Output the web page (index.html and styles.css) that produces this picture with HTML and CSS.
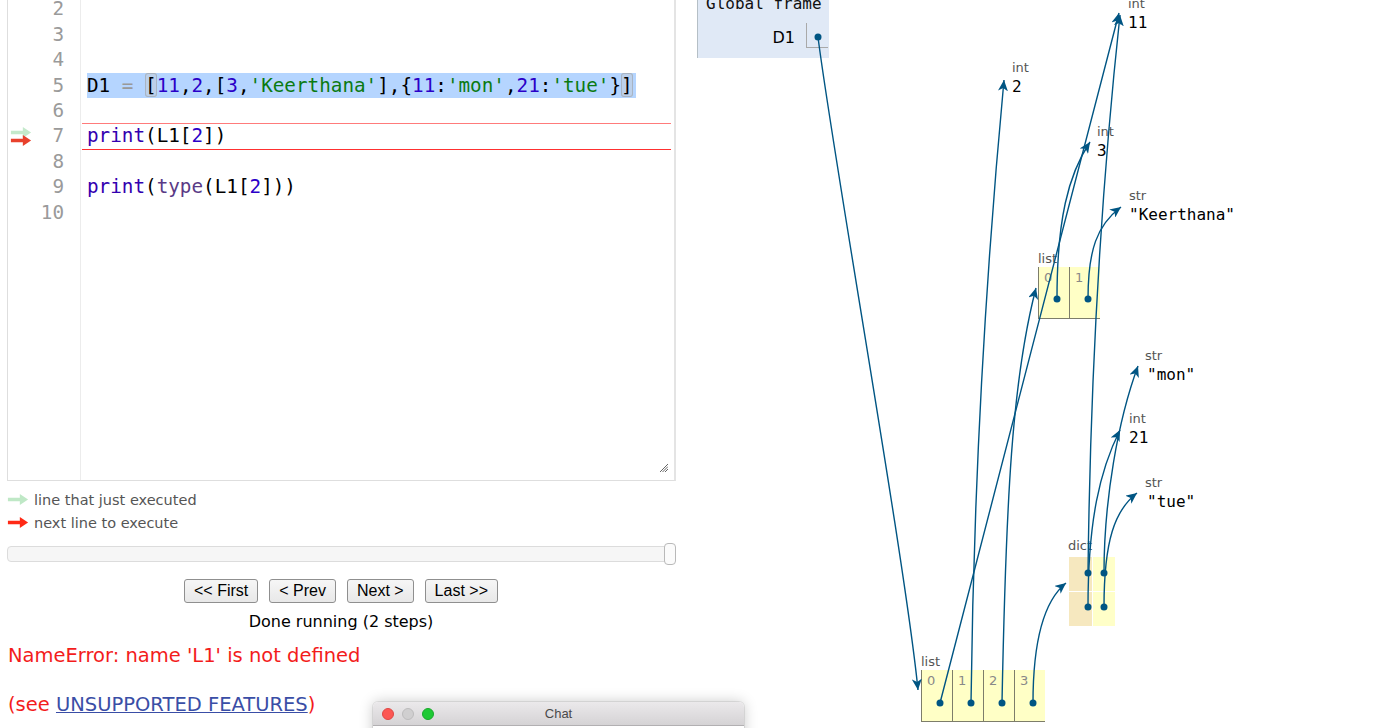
FILE: index.html
```html
<!DOCTYPE html>
<html>
<head>
<meta charset="utf-8">
<link rel="stylesheet" href="styles.css">
</head>
<body>
<div class="page">
  <div class="left">
    <div class="editor">
      <div class="gutter">
        <div class="ln">1</div>
        <div class="ln">2</div>
        <div class="ln">3</div>
        <div class="ln">4</div>
        <div class="ln">5</div>
        <div class="ln">6</div>
        <div class="ln">7
          <svg class="garrow g-prev" viewBox="0 0 22 12"><path d="M0,4 H13 V0 L22,6 L13,12 V8 H0 Z"/></svg>
          <svg class="garrow g-next" viewBox="0 0 22 12"><path d="M0,4 H13 V0 L22,6 L13,12 V8 H0 Z"/></svg>
        </div>
        <div class="ln">8</div>
        <div class="ln">9</div>
        <div class="ln">10</div>
      </div>
      <div class="code">
        <div class="cl"> </div>
        <div class="cl"> </div>
        <div class="cl"> </div>
        <div class="cl"> </div>
        <div class="cl"><span class="hl">D1 <span class="op">=</span> <span class="bm">[</span><span class="num">11</span>,<span class="num">2</span>,[<span class="num">3</span>,<span class="str">'Keerthana'</span>],{<span class="num">11</span>:<span class="str">'mon'</span>,<span class="num">21</span>:<span class="str">'tue'</span>}<span class="bm">]</span></span></div>
        <div class="cl"> </div>
        <div class="cl cur"><span class="kw">print</span>(L1[<span class="num">2</span>])</div>
        <div class="cl"> </div>
        <div class="cl"><span class="kw">print</span>(<span class="bi">type</span>(L1[<span class="num">2</span>]))</div>
        <div class="cl"> </div>
      </div>
      <svg class="grip" viewBox="0 0 9 8"><path d="M1,8 L9,0 M3.5,8 L9,2.5 M6,8 L9,5" /></svg>
    </div>

    <div class="legend">
      <div class="leg-row"><svg class="larrow prev" viewBox="0 0 22 12"><path d="M0,4 H13 V0 L22,6 L13,12 V8 H0 Z"/></svg><span>line that just executed</span></div>
      <div class="leg-row"><svg class="larrow next" viewBox="0 0 22 12"><path d="M0,4 H13 V0 L22,6 L13,12 V8 H0 Z"/></svg><span>next line to execute</span></div>
    </div>

    <div class="slider"><div class="handle"></div></div>

    <div class="buttons">
      <button class="btn">&lt;&lt; First</button>
      <button class="btn">&lt; Prev</button>
      <button class="btn">Next &gt;</button>
      <button class="btn">Last &gt;&gt;</button>
    </div>
    <div class="status">Done running (2 steps)</div>
    <div class="error">NameError: name 'L1' is not defined</div>
    <div class="see">(see <a href="#">UNSUPPORTED FEATURES</a>)</div>
  </div>

  <div class="viz">
    <div class="frame">
      <div class="frame-title">Global frame</div>
      <div class="frame-row">
        <div class="vname">D1</div>
        <div class="vbox"></div>
      </div>
    </div>

    <div class="obj o-11"><div class="lbl">int</div><div class="val">11</div></div>
    <div class="obj o-2"><div class="lbl">int</div><div class="val">2</div></div>
    <div class="obj o-3"><div class="lbl">int</div><div class="val">3</div></div>
    <div class="obj o-k"><div class="lbl">str</div><div class="val">"Keerthana"</div></div>
    <div class="obj o-mon"><div class="lbl">str</div><div class="val">"mon"</div></div>
    <div class="obj o-21"><div class="lbl">int</div><div class="val">21</div></div>
    <div class="obj o-tue"><div class="lbl">str</div><div class="val">"tue"</div></div>

    <div class="obj l-inner">
      <div class="lbl">list</div>
      <div class="cells">
        <div class="cell"><span class="idx">0</span></div>
        <div class="cell"><span class="idx">1</span></div>
      </div>
    </div>

    <div class="obj l-main">
      <div class="lbl">list</div>
      <div class="cells">
        <div class="cell"><span class="idx">0</span></div>
        <div class="cell"><span class="idx">1</span></div>
        <div class="cell"><span class="idx">2</span></div>
        <div class="cell"><span class="idx">3</span></div>
      </div>
    </div>

    <div class="obj d-main">
      <div class="lbl">dict</div>
      <div class="dgrid">
        <div class="dk"></div><div class="dv"></div>
        <div class="dk"></div><div class="dv"></div>
      </div>
    </div>

    <svg class="arrows" width="707" height="728">
      <defs>
        <marker id="ah" markerUnits="userSpaceOnUse" markerWidth="12" markerHeight="10" refX="11" refY="5" orient="auto">
          <path d="M0,0 L11,5 L0,10 L3,5 Z" fill="#005583"/>
        </marker>
      </defs>
      <g transform="translate(-690,0)" fill="none" stroke="#005583" stroke-width="1.4" marker-end="url(#ah)">
        <path d="M818,37 C832,150 905,560 918,690"/>
        <path d="M940,703 C975,560 1080,170 1119,13"/>
        <path d="M971,703 C974,450 988,250 1004,80"/>
        <path d="M1002,703 C1006,500 1012,380 1036,288"/>
        <path d="M1033,703 C1033,640 1045,600 1066,583"/>
        <path d="M1057,299 C1057,220 1068,175 1090,142"/>
        <path d="M1088,299 C1088,250 1097,225 1121,207"/>
        <path d="M1088,573 C1090,400 1100,200 1120,15"/>
        <path d="M1104,573 C1104,500 1118,420 1138,366"/>
        <path d="M1088,607 C1088,520 1100,470 1120,430"/>
        <path d="M1104,607 C1104,540 1115,510 1137,493"/>
      </g>
      <g transform="translate(-690,0)" fill="#005583">
        <circle cx="818" cy="37" r="3.5"/>
        <circle cx="940" cy="703" r="3.5"/>
        <circle cx="971" cy="703" r="3.5"/>
        <circle cx="1002" cy="703" r="3.5"/>
        <circle cx="1033" cy="703" r="3.5"/>
        <circle cx="1057" cy="299" r="3.5"/>
        <circle cx="1088" cy="299" r="3.5"/>
        <circle cx="1088" cy="573" r="3.5"/>
        <circle cx="1104" cy="573" r="3.5"/>
        <circle cx="1088" cy="607" r="3.5"/>
        <circle cx="1104" cy="607" r="3.5"/>
      </g>
    </svg>
  </div>
</div>

<div class="chat">
  <div class="chat-bar">
    <span class="tl red"></span><span class="tl gray"></span><span class="tl green"></span>
    <span class="chat-title">Chat</span>
  </div>
</div>
</body>
</html>
```

FILE: styles.css
```css
html, body {
  margin: 0;
  padding: 0;
  background: #fff;
  overflow: hidden;
}
body {
  width: 1397px;
  height: 728px;
  position: relative;
}
.page {
  display: flex;
  align-items: flex-start;
}
.left {
  width: 669px;
  margin-left: 7px;
  margin-top: -34px;
  font-family: "DejaVu Sans", Verdana, sans-serif;
}

/* editor */
.editor {
  position: relative;
  box-sizing: border-box;
  height: 515px;
  border: 1px solid #dedede;
  border-right: 2px solid #e4e4e4;
  display: flex;
}
.gutter {
  width: 72px;
  flex: none;
  border-right: 1px solid #ececec;
  padding-top: 4px;
}
.ln {
  position: relative;
  height: 25.4px;
  line-height: 25.4px;
  text-align: right;
  padding-right: 16px;
  color: #9a9a9a;
  font: 19.3px/25.4px "DejaVu Sans Mono", monospace;
}
.garrow {
  position: absolute;
  left: 2px;
  width: 22px;
  height: 11px;
}
.g-prev { top: 4px; fill: #c4e9cb; }
.g-next { top: 12px; fill: #e8412c; }
.code {
  flex: 1;
  padding-top: 4px;
  padding-right: 3px;
}
.cl {
  box-sizing: border-box;
  height: 25.4px;
  margin-left: 1px;
  padding-left: 5px;
  white-space: pre;
  font: 19.3px/25.4px "DejaVu Sans Mono", monospace;
  color: #000;
}
.cl.cur {
  height: 26.4px;
  margin-bottom: -1px;
  line-height: 24.4px;
  border-top: 1px solid #ff7b7b;
  border-bottom: 1px solid #ff3030;
}
.hl {
  display: inline-block;
  height: 25.4px;
  background: #b5d5ff;
  padding-right: 3px;
}
.bm {
  display: inline-block;
  height: 24px;
  box-shadow: inset 0 0 0 1px #a9b4c2;
  border-radius: 3px;
  background: #bcd0ea;
}
.op { color: #999; }
.num { color: #2b00c8; }
.str { color: #0b7a12; }
.kw { color: #3300b0; }
.bi { color: #5a3a86; }
.grip {
  position: absolute;
  right: 6px;
  bottom: 8px;
  width: 9px;
  height: 8px;
  stroke: #666;
  stroke-width: 1;
  fill: none;
}

/* legend */
.legend {
  margin-top: 7px;
}
.leg-row {
  display: flex;
  align-items: center;
  height: 23px;
  font-size: 14.5px;
  color: #555;
}
.larrow {
  width: 22px;
  height: 11px;
  margin-right: 5px;
}
.larrow.prev { fill: #bfe8c6; }
.larrow.next { fill: #ff2a16; }

/* slider */
.slider {
  position: relative;
  margin-top: 12px;
  height: 16px;
  box-sizing: border-box;
  border: 1px solid #dcdcdc;
  border-radius: 4px;
  background: #f6f6f6;
}
.handle {
  position: absolute;
  right: -1px;
  top: -4px;
  width: 12px;
  height: 22px;
  box-sizing: border-box;
  border: 1px solid #b9b9b9;
  border-radius: 4px;
  background: #fbfbfb;
}

/* buttons */
.buttons {
  margin-top: 17px;
  display: flex;
  justify-content: center;
  gap: 11px;
  padding-right: 1px;
}
.btn {
  height: 24px;
  padding: 0 9px;
  font: 16px "Liberation Sans", Arial, sans-serif;
  color: #000;
  background: linear-gradient(#f6f6f6, #e8e8e8);
  border: 1px solid #8f8f8f;
  border-radius: 3px;
}
.status {
  margin-top: 9px;
  text-align: center;
  font-size: 16px;
  line-height: 20px;
  color: #000;
  padding-right: 1px;
}
.error {
  margin-top: 12px;
  margin-left: 1px;
  font-size: 19.5px;
  line-height: 24px;
  color: #f31c1c;
}
.see {
  margin-top: 25px;
  margin-left: 1px;
  font-size: 19.5px;
  line-height: 24px;
  color: #f31c1c;
}
.see a {
  color: #3a4ea6;
  text-decoration: underline;
}

/* visualization */
.viz {
  position: relative;
  margin-left: 14px;
  width: 707px;
  height: 728px;
  font-family: "DejaVu Sans", Verdana, sans-serif;
}
.frame {
  position: absolute;
  left: 7px;
  top: -20px;
  width: 132px;
  height: 78px;
  box-sizing: border-box;
  background: #e0e9f6;
  border-left: 1px solid #b5bfc6;
  padding-top: 14px;
}
.frame-title {
  padding-left: 8px;
  font: 16px/20px "DejaVu Sans Mono", monospace;
  color: #111;
  white-space: nowrap;
}
.frame-row {
  display: flex;
  margin-top: 9px;
  height: 25px;
}
.vname {
  width: 97px;
  text-align: right;
  padding-top: 5px;
  font-size: 16px;
  line-height: 20px;
  color: #000;
}
.vbox {
  margin-left: 11px;
  width: 22px;
  height: 25px;
  box-sizing: border-box;
  border-left: 1px solid #a9a9a9;
  border-bottom: 1px solid #a9a9a9;
}

.obj {
  position: absolute;
}
.lbl {
  font-size: 13px;
  line-height: 16px;
  color: #555;
}
.val {
  font: 16px/22px "DejaVu Sans Mono", monospace;
  color: #000;
  white-space: nowrap;
}
.o-11 { left: 438px; top: -4px; }
.o-2 { left: 322px; top: 60px; }
.o-3 { left: 407px; top: 124px; }
.o-k { left: 439px; top: 188px; }
.o-mon { left: 455px; top: 348px; }
.o-mon .val, .o-tue .val { padding-left: 2px; }
.o-21 { left: 439px; top: 411px; }
.o-tue { left: 455px; top: 475px; }

.cells {
  display: flex;
}
.cell {
  width: 31px;
  height: 52px;
  box-sizing: border-box;
  background: #ffffc6;
  border-left: 1px solid #7d7d6a;
  border-bottom: 1px solid #7d7d6a;
  padding-left: 5px;
}
.idx {
  font-size: 13px;
  line-height: 22px;
  color: #888;
}
.l-inner { left: 348px; top: 251px; }
.l-main { left: 231px; top: 654px; }

.d-main { left: 379px; top: 538px; }
.d-main .lbl { margin-left: -1px; }
.dgrid {
  margin-top: 3px;
  display: grid;
  grid-template-columns: 23px 22px;
  grid-template-rows: 34px 34px;
  gap: 1px;
  background: #fff;
  width: 46px;
}
.dk { background: #f6e8bf; }
.dv { background: #ffffc8; }

.arrows {
  position: absolute;
  left: 0;
  top: 0;
  overflow: visible;
  pointer-events: none;
}

/* chat window */
.chat {
  position: absolute;
  left: 373px;
  top: 702px;
  width: 371px;
  height: 60px;
  background: #fff;
  border-radius: 5px 5px 0 0;
  box-shadow: 0 0 14px rgba(0, 0, 0, 0.22), 0 0 0 1px rgba(0, 0, 0, 0.08);
}
.chat-bar {
  position: relative;
  height: 24px;
  box-sizing: border-box;
  border-radius: 5px 5px 0 0;
  background: linear-gradient(#ebe9eb, #d5d3d5);
  border-bottom: 1px solid #b2b0b2;
  display: flex;
  align-items: center;
  padding-left: 9px;
  gap: 8px;
}
.tl {
  width: 12px;
  height: 12px;
  border-radius: 50%;
  box-sizing: border-box;
}
.tl.red { background: #fc5753; border: 1px solid #df4744; }
.tl.gray { background: #d0cfd0; border: 1px solid #bdbcbd; }
.tl.green { background: #1ec934; border: 1px solid #19a92b; }
.chat-title {
  position: absolute;
  left: 0;
  right: 0;
  text-align: center;
  font: 13px "Liberation Sans", Arial, sans-serif;
  color: #4a4a4a;
  pointer-events: none;
}
```
